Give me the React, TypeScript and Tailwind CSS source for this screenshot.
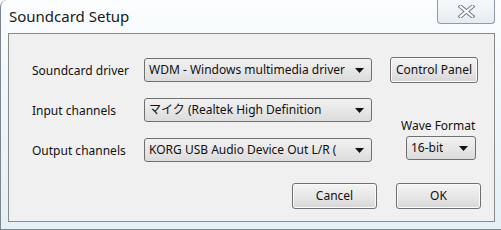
import React from 'react';

const font = { fontFamily: '"Noto Sans", "Noto Sans CJK JP", sans-serif' };

const Combo: React.FC<{ text: string; className: string }> = ({ text, className }) => (
  <div
    className={`flex items-center justify-between rounded-[3px] border border-[#707070] bg-gradient-to-b from-[#f2f2f2] to-[#dcdcdc] pl-[4px] pr-[7px] text-[12px] text-[#111] ${className}`}
  >
    <span className="overflow-hidden whitespace-nowrap">{text}</span>
    <svg width="9" height="5" viewBox="0 0 9 5" className="shrink-0">
      <path d="M0 0 H9 L4.5 5 Z" fill="#111" />
    </svg>
  </div>
);

const Button: React.FC<{ label: string; className: string }> = ({ label, className }) => (
  <div
    className={`flex items-center justify-center rounded-[3px] border border-[#707070] bg-gradient-to-b from-[#f4f4f4] via-[#e8e8e8] to-[#d6d6d6] text-[12px] text-[#111] shadow-[inset_0_0_0_1px_#fbfbfb] ${className}`}
  >
    {label}
  </div>
);

export default function App() {
  return (
    <div className="w-[501px] h-[230px] bg-white" style={font}>
      <div className="relative flex h-[230px] w-[501px] flex-col rounded-tl-[7px] border-l border-b border-[#7a8590] bg-gradient-to-b from-[#fbfdfe] via-[#eef6fa] to-[#e3f0f6]">
        {/* title bar */}
        <div className="flex h-[33px] items-start">
          <div className="pl-[8px] pt-[5px] text-[15px] text-[#1a1a1a]">Soundcard Setup</div>
          <div className="ml-auto mr-[6px] flex h-[24px] w-[58px] items-center justify-center rounded-b-[4px] border border-t-0 border-[#8e9aa6] bg-gradient-to-b from-[#f6f9fb] to-[#e4ecf1]">
            <svg width="17" height="13" viewBox="0 0 17 13">
              <path d="M2.5 1.5 L14.5 11.5 M14.5 1.5 L2.5 11.5" stroke="#6d7780" strokeWidth="4" strokeLinecap="square" />
              <path d="M2.5 1.5 L14.5 11.5 M14.5 1.5 L2.5 11.5" stroke="#ffffff" strokeWidth="2" strokeLinecap="square" />
            </svg>
          </div>
        </div>

        {/* client area */}
        <div className="ml-[7px] h-[189px] w-[487px] border border-[#8a8a8a] bg-[#f0f0f0] text-[12px] text-[#111]">
          <div className="mt-[23px] ml-[23px] flex h-[26px] items-center">
            <div className="w-[112px] pt-[2px]">Soundcard driver</div>
            <Combo text="WDM - Windows multimedia driver" className="h-[24px] w-[228px]" />
            <Button label="Control Panel" className="ml-[18px] h-[26px] w-[88px]" />
          </div>

          <div className="ml-[23px] flex">
            <div className="flex flex-col">
              <div className="mt-[14px] flex h-[26px] items-center">
                <div className="w-[112px] pt-[2px]">Input channels</div>
                <Combo text="マイク (Realtek High Definition" className="h-[24px] w-[228px]" />
              </div>
              <div className="mt-[14px] flex h-[26px] items-center">
                <div className="w-[112px] pt-[2px]">Output channels</div>
                <Combo text="KORG USB Audio Device Out L/R (" className="h-[24px] w-[228px]" />
              </div>
            </div>
            <div className="ml-[29px] flex flex-col items-start">
              <div className="mt-[35px] leading-[16px]">Wave Format</div>
              <Combo text="16-bit" className="mt-[2px] ml-[5px] h-[24px] w-[70px]" />
            </div>
          </div>

          <div className="mt-[20px] mr-[13px] flex justify-end gap-[19px]">
            <Button label="Cancel" className="h-[26px] w-[85px]" />
            <Button label="OK" className="h-[26px] w-[85px]" />
          </div>
        </div>
      </div>
    </div>
  );
}
